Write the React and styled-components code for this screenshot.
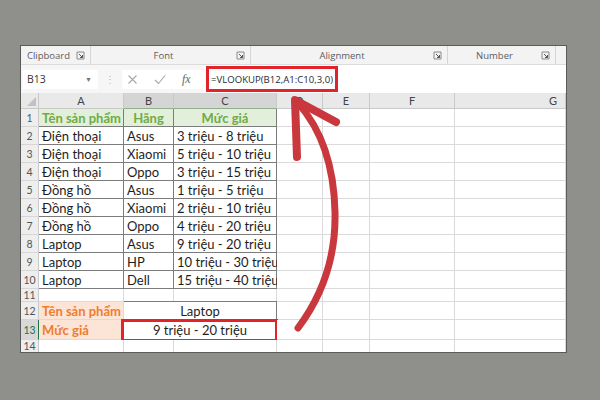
import React from 'react';
import styled, { createGlobalStyle } from 'styled-components';

const GlobalStyle = createGlobalStyle`
  html, body {
    margin: 0;
    padding: 0;
    background: #8f908b;
  }
  body {
    font-family: Lato, "Liberation Sans", sans-serif;
  }
`;

// green / orange fills used in the sheet
const GREEN_FILL = '#e2efda';
const GREEN_TEXT = '#6fac46';
const PEACH_FILL = '#fce4d6';
const ORANGE_TEXT = '#ef7d31';

const Page = styled.div`
  position: relative;
  width: 600px;
  height: 400px;
  box-sizing: border-box;
  padding: 45px 33px 0 20px;
  overflow: hidden;
`;

const Window = styled.div`
  width: 547px;
  height: 308px;
  box-sizing: border-box;
  background: #fff;
  border: 1px solid #5b5b5b;
  display: flex;
  flex-direction: column;
  overflow: hidden;
`;

const Ribbon = styled.div`
  height: 18px;
  flex: none;
  display: flex;
  background: #f3f3f3;
  border-bottom: 1px solid #dcdcdc;
  box-shadow: 0 1px 2px rgba(0, 0, 0, 0.08);
`;

const Group = styled.div`
  width: ${(p) => p.$w}px;
  flex: none;
  display: flex;
  align-items: center;
  padding-right: 5px;
  box-sizing: border-box;
  border-right: 1px solid #d6d6d6;
`;

const GroupLabel = styled.span`
  flex: 1;
  text-align: center;
  font-family: "Open Sans", sans-serif;
  font-size: 9.5px;
  color: #5d5d5d;
`;

const FormulaRow = styled.div`
  height: 28px;
  flex: none;
  display: flex;
  align-items: center;
  background: #f6f6f6;
`;

const NameBox = styled.div`
  width: 75px;
  height: 19px;
  margin-left: 2px;
  box-sizing: border-box;
  background: #fff;
  display: flex;
  align-items: center;
  justify-content: space-between;
  padding: 0 6px 0 4px;
  font-family: "Open Sans", sans-serif;
  font-size: 10.5px;
  color: #333;
`;

const Caret = styled.span`
  font-size: 7px;
  color: #777;
`;

const Dots = styled.span`
  width: 24px;
  text-align: center;
  color: #b5b5b5;
  font-size: 10px;
`;

const IconArea = styled.div`
  width: 82px;
  height: 19px;
  background: #fff;
  display: flex;
  align-items: center;
  gap: 16px;
  padding-left: 5px;
  box-sizing: border-box;
`;

const Fx = styled.span`
  font-family: "Liberation Serif", serif;
  font-style: italic;
  font-size: 12px;
  color: #666;
`;

const FormulaInput = styled.div`
  flex: 1;
  height: 28px;
  background: #fff;
  display: flex;
  align-items: center;
  padding-left: 2px;
`;

const FormulaBox = styled.div`
  height: 26px;
  box-sizing: border-box;
  border: 3px solid #e2232a;
  display: flex;
  align-items: center;
  padding: 0 2px 0 2px;
  font-family: "Open Sans", sans-serif;
  font-size: 9.6px;
  color: #2b2b2b;
`;

const Grid = styled.div`
  flex: 1;
  display: grid;
  grid-template-columns: 18px 85px 50px 103px 46px 47px 85px 1fr;
  grid-template-rows: 16px repeat(10, 18px) 13px 18px 20px 1fr;
`;

const Corner = styled.div`
  background: #e9e9e9;
  border-right: 1px solid #c9c9c9;
  border-bottom: 1px solid #c9c9c9;
  position: relative;
  &::after {
    content: '';
    position: absolute;
    right: 2px;
    bottom: 2px;
    border-left: 9px solid transparent;
    border-bottom: 9px solid #c2c2c2;
  }
`;

const ColHead = styled.div`
  background: ${(p) => (p.$selected ? '#d5d5d5' : '#e9e9e9')};
  border-right: 1px solid #c9c9c9;
  border-bottom: 1px solid ${(p) => (p.$selected ? '#8eb08e' : '#c9c9c9')};
  display: flex;
  align-items: center;
  justify-content: ${(p) => (p.$end ? 'flex-end' : 'center')};
  padding-right: ${(p) => (p.$end ? '8px' : '0')};
  font-size: 11px;
  color: #444;
`;

const RowHead = styled.div`
  background: ${(p) => (p.$selected ? '#d8d8d8' : '#eeeeee')};
  border-bottom: 1px solid #d6d6d6;
  border-right: 1px solid ${(p) => (p.$selected ? '#217346' : '#c9c9c9')};
  display: flex;
  align-items: center;
  justify-content: center;
  font-size: 10.5px;
  color: ${(p) => (p.$selected ? '#217346' : '#555')};
`;

const Cell = styled.div`
  position: relative;
  grid-column: ${(p) => (p.$span ? `span ${p.$span}` : 'auto')};
  background: ${(p) => p.$fill || '#fff'};
  border-right: 1px solid ${(p) => (p.$boxed ? '#7c7c7c' : '#dadada')};
  border-bottom: 1px solid ${(p) => (p.$boxed ? '#7c7c7c' : '#dadada')};
  box-shadow: ${(p) => (p.$top ? '0 -1px 0 #7c7c7c' : 'none')};
  display: flex;
  align-items: center;
  justify-content: ${(p) => (p.$center ? 'center' : 'flex-start')};
  padding-left: ${(p) => (p.$center ? '0' : '3px')};
  white-space: nowrap;
  overflow: visible;
  font-size: 13px;
  font-weight: ${(p) => (p.$bold ? 700 : 400)};
  color: ${(p) => p.$color || '#1e1e1e'};
`;

const Highlight = styled.div`
  position: absolute;
  left: -3px;
  right: -2px;
  top: -1px;
  bottom: -3px;
  border: 3px solid #e2232a;
  pointer-events: none;
`;

const Arrow = styled.svg`
  position: absolute;
  left: 0;
  top: 0;
  pointer-events: none;
`;

const groups = [
  { label: 'Clipboard', w: 70 },
  { label: 'Font', w: 160 },
  { label: 'Alignment', w: 197 },
  { label: 'Number', w: 108 },
];

const products = [
  ['Điện thoại', 'Asus', '3 triệu - 8 triệu'],
  ['Điện thoại', 'Xiaomi', '5 triệu - 10 triệu'],
  ['Điện thoại', 'Oppo', '3 triệu - 15 triệu'],
  ['Đồng hồ', 'Asus', '1 triệu - 5 triệu'],
  ['Đồng hồ', 'Xiaomi', '2 triệu - 10 triệu'],
  ['Đồng hồ', 'Oppo', '4 triệu - 20 triệu'],
  ['Laptop', 'Asus', '9 triệu - 20 triệu'],
  ['Laptop', 'HP', '10 triệu - 30 triệu'],
  ['Laptop', 'Dell', '15 triệu - 40 triệu'],
];

function Launcher() {
  return (
    <svg width="9" height="9" viewBox="0 0 9 9">
      <path d="M1 1h7v7H1z" fill="none" stroke="#8a8a8a" strokeWidth="1" />
      <path d="M3 3l3.5 3.5M6.5 4v2.5H4" fill="none" stroke="#555" strokeWidth="1" />
    </svg>
  );
}

function EmptyCells({ n }) {
  return Array.from({ length: n }).map((_, i) => <Cell key={i} />);
}

function App() {
  return (
    <Page>
      <GlobalStyle />
      <Window>
        <Ribbon>
          {groups.map((g) => (
            <Group key={g.label} $w={g.w}>
              <GroupLabel>{g.label}</GroupLabel>
              <Launcher />
            </Group>
          ))}
        </Ribbon>

        <FormulaRow>
          <NameBox>
            B13
            <Caret>▼</Caret>
          </NameBox>
          <Dots>⋮</Dots>
          <IconArea>
            <svg width="11" height="11" viewBox="0 0 11 11">
              <path d="M1.5 1.5l8 8M9.5 1.5l-8 8" stroke="#a8a8a8" strokeWidth="1.1" />
            </svg>
            <svg width="12" height="11" viewBox="0 0 12 11">
              <path d="M1 6l3.5 3.5L11 1.5" fill="none" stroke="#a8a8a8" strokeWidth="1.1" />
            </svg>
            <Fx>fx</Fx>
          </IconArea>
          <FormulaInput>
            <FormulaBox>=VLOOKUP(B12,A1:C10,3,0)</FormulaBox>
          </FormulaInput>
        </FormulaRow>

        <Grid>
          <Corner />
          <ColHead>A</ColHead>
          <ColHead $selected>B</ColHead>
          <ColHead $selected>C</ColHead>
          <ColHead>D</ColHead>
          <ColHead>E</ColHead>
          <ColHead>F</ColHead>
          <ColHead $end>G</ColHead>

          <RowHead>1</RowHead>
          <Cell $boxed $fill={GREEN_FILL} $color={GREEN_TEXT} $bold>Tên sản phẩm</Cell>
          <Cell $boxed $fill={GREEN_FILL} $color={GREEN_TEXT} $bold $center>Hãng</Cell>
          <Cell $boxed $fill={GREEN_FILL} $color={GREEN_TEXT} $bold $center>Mức giá</Cell>
          <EmptyCells n={4} />

          {products.map((p, i) => (
            <React.Fragment key={i}>
              <RowHead>{i + 2}</RowHead>
              <Cell $boxed>{p[0]}</Cell>
              <Cell $boxed>{p[1]}</Cell>
              <Cell $boxed>{p[2]}</Cell>
              <EmptyCells n={4} />
            </React.Fragment>
          ))}

          <RowHead>11</RowHead>
          <EmptyCells n={7} />

          <RowHead>12</RowHead>
          <Cell $fill={PEACH_FILL} $color={ORANGE_TEXT} $bold>Tên sản phẩm</Cell>
          <Cell $span={2} $boxed $top $center>Laptop</Cell>
          <EmptyCells n={4} />

          <RowHead $selected>13</RowHead>
          <Cell $fill={PEACH_FILL} $color={ORANGE_TEXT} $bold>Mức giá</Cell>
          <Cell $span={2} $boxed $center>
            9 triệu - 20 triệu
            <Highlight />
          </Cell>
          <EmptyCells n={4} />

          <RowHead>14</RowHead>
          <EmptyCells n={7} />
        </Grid>
      </Window>

      <Arrow width="600" height="400" viewBox="0 0 600 400">
        <path
          d="M298 328 C322 296 336 256 335 212 C334 166 322 130 298 103"
          fill="none"
          stroke="#c9383d"
          strokeWidth="7"
          strokeLinecap="round"
        />
        <path
          d="M297 157 L295 100 L336 122"
          fill="none"
          stroke="#c9383d"
          strokeWidth="8"
          strokeLinecap="round"
          strokeLinejoin="round"
        />
      </Arrow>
    </Page>
  );
}

export default App;
